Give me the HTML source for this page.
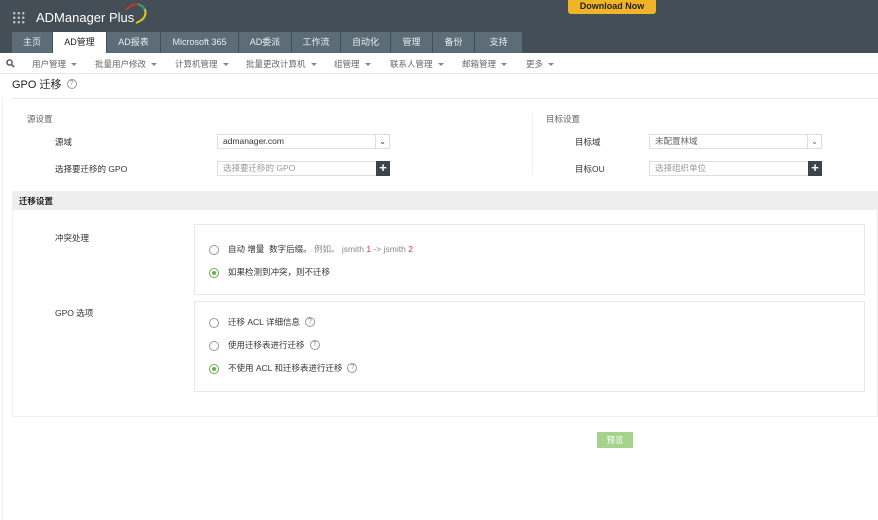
<!DOCTYPE html>
<html><head><meta charset="utf-8"><style>
*{margin:0;padding:0;box-sizing:border-box}
body{width:878px;height:520px;background:#fff;font-family:"Liberation Sans","Noto Sans CJK SC",sans-serif;font-size:9px;color:#333;position:relative;overflow:hidden}
.abs{position:absolute}
.hdr{left:0;top:0;width:878px;height:53px;background:#434e57}
.tab{position:absolute;top:32px;height:21px;background:#5d6d78;color:#e8eef2;font-size:9px;text-align:center;line-height:21px;border-right:1px solid #434e57}
.tab.act{background:#fff;color:#222}
.sub{top:53px;left:0;width:878px;height:21px;border-bottom:1px solid #e8e8e8;color:#666;font-size:8.5px}
.sub span{position:absolute;top:5px}
.car{display:inline-block;border:3px solid transparent;border-top:3px solid #888;margin-left:5px;vertical-align:-2px}
.inp{position:absolute;height:15px;border:1px solid #ddd;font-size:8.5px;line-height:13px;padding-left:5px}
.plus{position:absolute;width:14px;height:15px;background:#3c4449;color:#fff;text-align:center;font-size:13px;line-height:14px;font-weight:bold}
.radio{position:absolute;width:10px;height:10px;border:1px solid #999;border-radius:50%}
.radio.on{border-color:#6ab04c}
.radio.on:after{content:"";position:absolute;left:2px;top:2px;width:4px;height:4px;background:#6ab04c;border-radius:50%}
.q{display:inline-block;width:10px;height:10px;border:1px solid #999;border-radius:50%;font-size:7px;line-height:8px;text-align:center;color:#888;margin-left:5px;vertical-align:middle;position:relative;top:-1px}
.t{position:absolute;font-size:8.5px;color:#333;line-height:11px}
</style></head><body>
<div class="abs hdr"></div>
<div class="abs" style="left:12px;top:11px;width:13px;height:13px;background:
radial-gradient(circle,#bbb 1.2px,transparent 1.4px) 0 0/4.5px 4.5px"></div>
<div class="abs" style="left:36px;top:10px;color:#fff;font-size:13px">ADManager Plus</div>
<svg class="abs" style="left:124px;top:1px" width="26" height="24"><path d="M2 9 Q10 0 19 5" stroke="#c0392b" stroke-width="2" fill="none"/><path d="M14 3 Q22 6 21 14" stroke="#27ae60" stroke-width="1.8" fill="none"/><path d="M19 5 Q25 12 18 20" stroke="#2e86c1" stroke-width="1.5" fill="none"/><path d="M21 8 Q24 17 12 22" stroke="#f1c40f" stroke-width="1.8" fill="none"/></svg>
<div class="abs" style="left:568px;top:0;width:88px;height:14px;background:#f0b429;border-radius:0 0 3px 3px;color:#222;font-weight:bold;font-size:9px;text-align:center;line-height:13px">Download Now</div>
<div class="tab" style="left:12px;width:41px">主页</div>
<div class="tab act" style="left:53px;width:54px">AD管理</div>
<div class="tab" style="left:107px;width:54px">AD报表</div>
<div class="tab" style="left:161px;width:78px">Microsoft 365</div>
<div class="tab" style="left:239px;width:53px">AD委派</div>
<div class="tab" style="left:292px;width:49px">工作流</div>
<div class="tab" style="left:341px;width:50px">自动化</div>
<div class="tab" style="left:391px;width:42px">管理</div>
<div class="tab" style="left:433px;width:42px">备份</div>
<div class="tab" style="left:475px;width:48px">支持</div>
<div class="abs sub">
<svg class="abs" style="left:6px;top:6px" width="9" height="9"><circle cx="3.5" cy="3.5" r="2.6" stroke="#444" stroke-width="1.3" fill="none"/><path d="M5.5 5.5 L8 8" stroke="#444" stroke-width="1.4"/></svg>
<span style="left:32px">用户管理<i class="car"></i></span>
<span style="left:95px">批量用户修改<i class="car"></i></span>
<span style="left:175px">计算机管理<i class="car"></i></span>
<span style="left:246px">批量更改计算机<i class="car"></i></span>
<span style="left:334px">组管理<i class="car"></i></span>
<span style="left:390px">联系人管理<i class="car"></i></span>
<span style="left:462px">邮箱管理<i class="car"></i></span>
<span style="left:526px">更多<i class="car"></i></span>
</div>
<div class="abs" style="left:12px;top:79px;font-size:11px;color:#222;line-height:13px">GPO 迁移<span class="q">?</span></div>
<div class="abs" style="left:12px;top:98px;width:866px;border-top:1px solid #e8e8e8"></div>
<div class="abs" style="left:2px;top:98px;height:422px;border-left:1px solid #eee"></div>
<div class="t" style="left:27px;top:114px;color:#666">源设置</div>
<div class="t" style="left:55px;top:137px">源域</div>
<div class="inp" style="left:217px;top:134px;width:173px">admanager.com<span style="position:absolute;right:0;top:0;width:14px;height:13px;border-left:1px solid #ddd;text-align:center">&#8964;</span></div>
<div class="t" style="left:55px;top:164px">选择要迁移的 GPO</div>
<div class="inp" style="left:217px;top:161px;width:160px;color:#999">选择要迁移的 GPO</div>
<div class="plus" style="left:376px;top:161px">+</div>
<div class="abs" style="left:532px;top:113px;height:62px;border-left:1px solid #eee"></div>
<div class="t" style="left:546px;top:114px;color:#666">目标设置</div>
<div class="t" style="left:575px;top:137px">目标域</div>
<div class="inp" style="left:649px;top:134px;width:173px;color:#666">未配置林域<span style="position:absolute;right:0;top:0;width:14px;height:13px;border-left:1px solid #ddd;text-align:center">&#8964;</span></div>
<div class="t" style="left:575px;top:164px">目标OU</div>
<div class="inp" style="left:649px;top:161px;width:160px;color:#999">选择组织单位</div>
<div class="plus" style="left:808px;top:161px">+</div>
<div class="abs" style="left:12px;top:191px;width:866px;height:19px;background:#eeeeee;font-size:8.5px;font-weight:bold;padding:4px 7px;color:#222">迁移设置</div>
<div class="abs" style="left:12px;top:210px;width:866px;height:207px;border:1px solid #eee;border-top:none"></div>
<div class="t" style="left:55px;top:233px">冲突处理</div>
<div class="abs" style="left:194px;top:224px;width:671px;height:71px;border:1px solid #e8e8e8"></div>
<div class="radio" style="left:209px;top:245px"></div>
<div class="t" style="left:228px;top:244px">自动 增量 &nbsp;数字后缀。 <span style="color:#888">例如。 jsmith <span style="color:#d33">1</span> -&gt; jsmith <span style="color:#d33">2</span></span></div>
<div class="radio on" style="left:209px;top:268px"></div>
<div class="t" style="left:228px;top:267px">如果检测到冲突，则不迁移</div>
<div class="t" style="left:55px;top:308px">GPO 选项</div>
<div class="abs" style="left:194px;top:301px;width:671px;height:91px;border:1px solid #e8e8e8"></div>
<div class="radio" style="left:209px;top:318px"></div>
<div class="t" style="left:228px;top:317px">迁移 ACL 详细信息<span class="q">?</span></div>
<div class="radio" style="left:209px;top:341px"></div>
<div class="t" style="left:228px;top:340px">使用迁移表进行迁移<span class="q">?</span></div>
<div class="radio on" style="left:209px;top:364px"></div>
<div class="t" style="left:228px;top:363px">不使用 ACL 和迁移表进行迁移<span class="q">?</span></div>
<div class="abs" style="left:597px;top:432px;width:36px;height:16px;background:#a6d38c;color:#fff;font-size:8.5px;text-align:center;line-height:16px">预览</div>
</body></html>
